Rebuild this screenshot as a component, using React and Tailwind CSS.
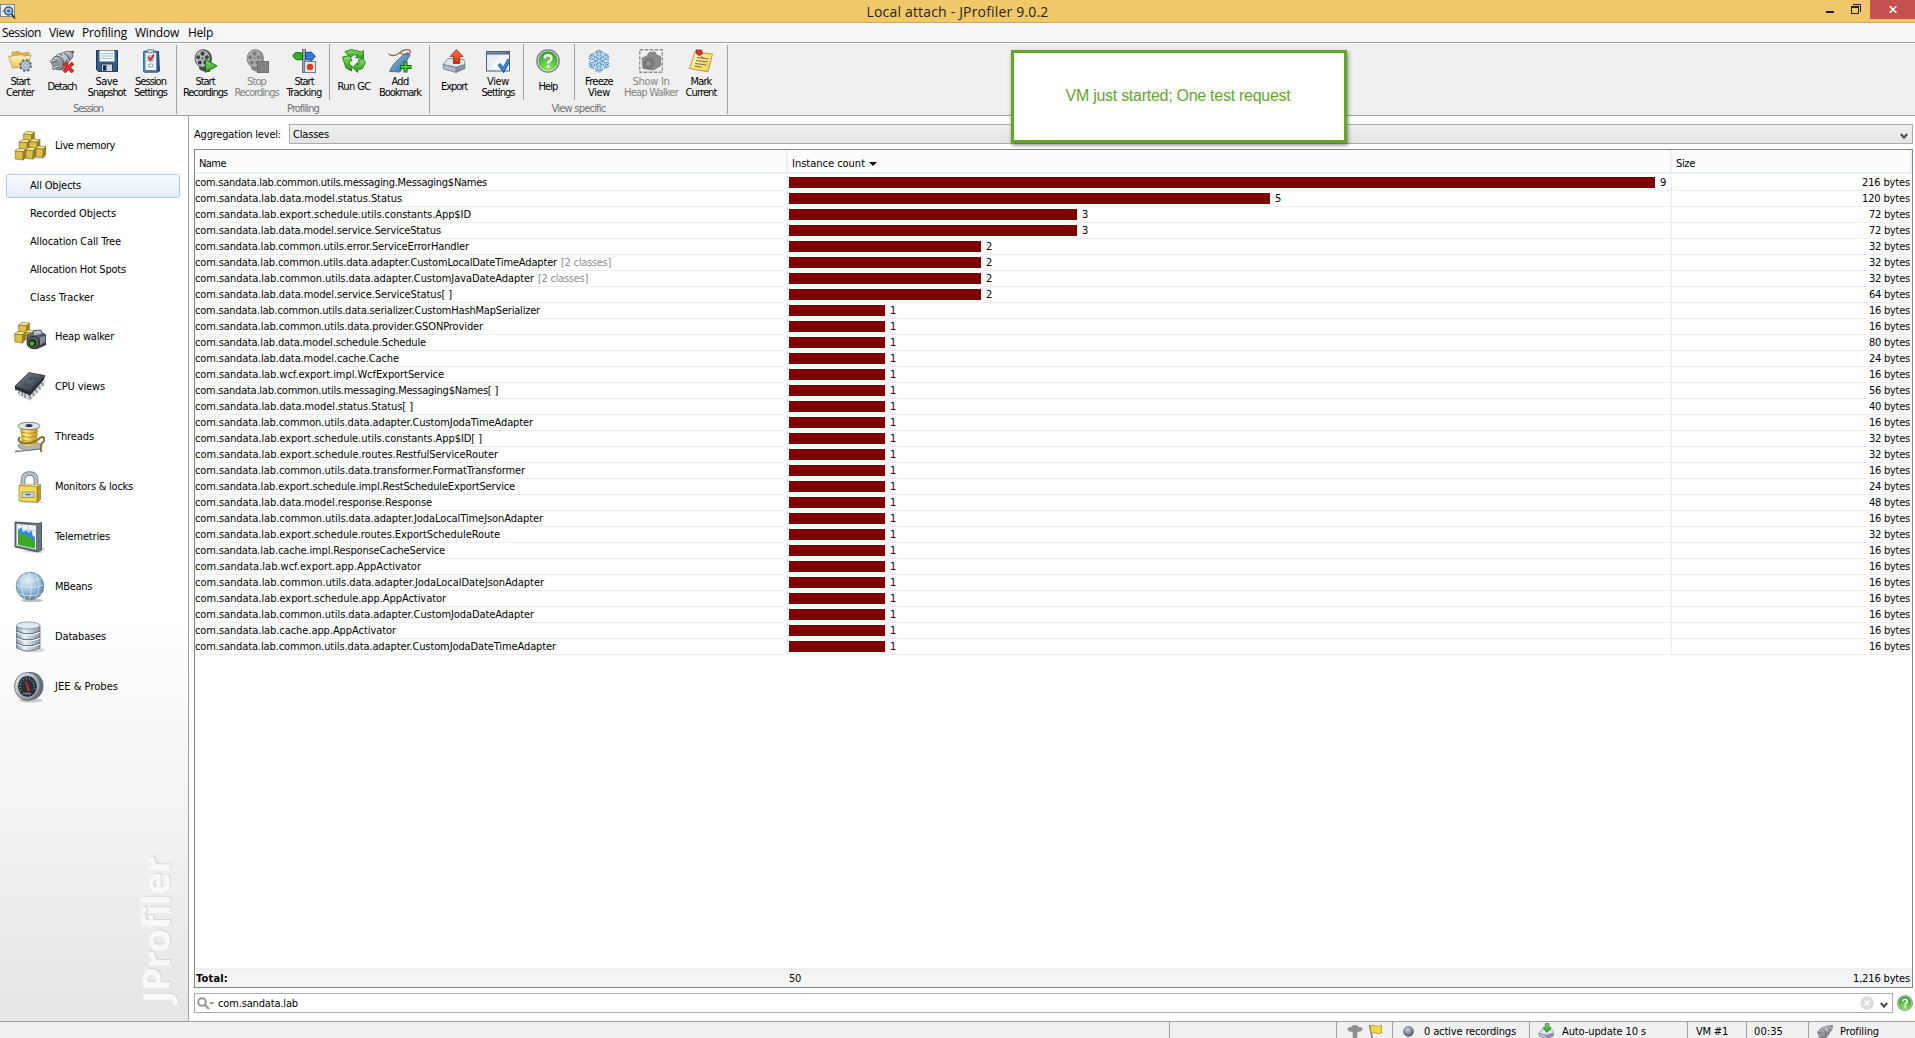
import React, { useLayoutEffect, useRef, useState } from "react";

/* Text run spread to an exact advance width. */
function Fit({ w, className = "", children }) {
  const ref = useRef(null);
  const [spacing, setSpacing] = useState(0);
  useLayoutEffect(() => {
    const natural = ref.current.getBoundingClientRect().width;
    setSpacing((w - natural) / String(children).length);
  }, []);
  return (
    <span ref={ref} style={{ letterSpacing: spacing + "px" }} className={"inline-block whitespace-pre " + className}>
      {children}
    </span>
  );
}

function Defs() {
  return (
    <svg className="absolute size-0">
      <defs>
        <linearGradient id="steel" x1="0" y1="0" x2="1" y2="1">
          <stop offset="0" stopColor="#f4f6f8" />
          <stop offset=".5" stopColor="#a9b1b8" />
          <stop offset="1" stopColor="#596068" />
        </linearGradient>
        <linearGradient id="dark" x1="0" y1="0" x2="1" y2="1">
          <stop offset="0" stopColor="#7c8894" />
          <stop offset="1" stopColor="#252c33" />
        </linearGradient>
        <linearGradient id="gold" x1="0" y1="0" x2="1" y2="0">
          <stop offset="0" stopColor="#c99a14" />
          <stop offset=".35" stopColor="#fff07a" />
          <stop offset="1" stopColor="#c48a10" />
        </linearGradient>
        <linearGradient id="folder" x1="0" y1="0" x2="0" y2="1">
          <stop offset="0" stopColor="#fdf3c4" />
          <stop offset="1" stopColor="#eec45c" />
        </linearGradient>
        <linearGradient id="note" x1="0" y1="0" x2="1" y2="1">
          <stop offset="0" stopColor="#fff9c8" />
          <stop offset="1" stopColor="#f2cf45" />
        </linearGradient>
        <linearGradient id="green" x1="0" y1="0" x2="0" y2="1">
          <stop offset="0" stopColor="#8be06a" />
          <stop offset="1" stopColor="#2a9a17" />
        </linearGradient>
        <linearGradient id="blue" x1="0" y1="0" x2="1" y2="1">
          <stop offset="0" stopColor="#a9cdea" />
          <stop offset="1" stopColor="#1d5c9e" />
        </linearGradient>
        <linearGradient id="red" x1="0" y1="0" x2="0" y2="1">
          <stop offset="0" stopColor="#ff7a4a" />
          <stop offset="1" stopColor="#cf2a10" />
        </linearGradient>
        <linearGradient id="drum" x1="0" y1="0" x2="1" y2="0">
          <stop offset="0" stopColor="#8b9aa6" />
          <stop offset=".35" stopColor="#e9f0f5" />
          <stop offset="1" stopColor="#8797a5" />
        </linearGradient>
        <radialGradient id="globe" cx=".4" cy=".3" r=".75">
          <stop offset="0" stopColor="#e4f0f9" />
          <stop offset=".6" stopColor="#93b8d6" />
          <stop offset="1" stopColor="#56799a" />
        </radialGradient>
        <radialGradient id="ball" cx=".4" cy=".3" r=".8">
          <stop offset="0" stopColor="#ccd4dc" />
          <stop offset="1" stopColor="#3f4a56" />
        </radialGradient>
        <radialGradient id="helpg" cx=".5" cy=".85" r=".9">
          <stop offset="0" stopColor="#8aea5e" />
          <stop offset="1" stopColor="#2c9425" />
        </radialGradient>
      </defs>
    </svg>
  );
}

const Svg = ({ s = 24, vb = 24, children, className = "" }) => (
  <svg width={s} height={s} viewBox={`0 0 ${vb} ${vb}`} fill="none" className={"block shrink-0 " + className}>
    {children}
  </svg>
);

const Reel = ({ c1, c2, c3 }) => (
  <>
    <path d="M6 17 Q5 21 11 22.500 L17 23 L17 18 Z" fill={c2} />
    <ellipse cx="11" cy="9.500" rx="8" ry="9" fill={c2} />
    <ellipse cx="9.600" cy="9.500" rx="7.600" ry="8.800" fill={c1} stroke={c3} strokeWidth=".8" />
    <circle cx="9.600" cy="4.600" r="2.100" fill={c3} />
    <circle cx="5.200" cy="8.200" r="1.900" fill={c3} />
    <circle cx="13.800" cy="8.200" r="1.900" fill={c3} />
    <circle cx="6.800" cy="13.500" r="2" fill={c3} />
    <circle cx="12.400" cy="13.500" r="2" fill={c3} />
    <circle cx="9.600" cy="9.400" r="1" fill={c3} />
    <path d="M7 20 L10 18.500 M10 21.500 L13 19" stroke={c3} />
  </>
);

const StartCenter = () => (
  <Svg>
    <path d="M4 3.500 L11 2.500 L12.500 4.500 L21 3.500 L21 15 L6 18 Z" fill="#e3b64e" stroke="#b98a2c" strokeWidth=".8" />
    <path d="M.7 7.500 L14 5.500 L15.500 7 L23.300 6 L19 17 L4.500 19 Z" fill="url(#folder)" stroke="#c0913a" strokeWidth=".8" />
    <circle cx="17.500" cy="16.500" r="5.200" stroke="#5f7387" strokeWidth="2.600" strokeDasharray="2.200 1.880" />
    <circle cx="17.500" cy="16.500" r="4.500" fill="#b9cadb" stroke="#5f7387" strokeWidth=".8" />
    <circle cx="17.500" cy="16.500" r="1.700" fill="#f4f4f4" stroke="#5f7387" strokeWidth=".8" />
  </Svg>
);
const Plug = () => (
  <>
    <path d="M18 5 Q20 2.500 24 3" stroke="#5a5f64" strokeWidth="2.200" />
    <path d="M5 8 Q7 4.500 11 4.500 L16 2.500 Q22 1.500 23 5 Q23.500 9 19 12.500 L17 17 Q14 21 10 21 Z" fill="url(#steel)" stroke="#555b60" strokeWidth=".8" />
    <path d="M10 5.500 Q16 8 17.500 14.500 M14 4 Q18.500 6 20 11" stroke="#50565b" />
    <path d="M12 6.500 Q15 8 16 11" stroke="#fff" strokeWidth=".9" />
    <ellipse cx="8" cy="14" rx="5.800" ry="7" transform="rotate(-30 8 14)" fill="url(#steel)" stroke="#555b60" strokeWidth=".9" />
    <ellipse cx="7" cy="14.800" rx="3.600" ry="4.800" transform="rotate(-30 7 14.800)" fill="#8f969c" />
    <path d="M.5 13 L6.500 11 M2.500 20 L9 17" stroke="#4c5258" strokeWidth="2.600" />
    <path d="M.8 12.600 L6.300 10.800 M2.800 19.500 L8.800 16.700" stroke="#e8ebed" strokeWidth="1.100" />
  </>
);
const Detach = () => (
  <Svg>
    <Plug />
    <path d="M14 14 L23 23 M23 14 L14 23" stroke="#a30f0f" strokeWidth="3.600" />
    <path d="M14.300 14.300 L22.700 22.700 M22.700 14.300 L14.300 22.700" stroke="#e8302a" strokeWidth="2.400" />
  </Svg>
);
const Save = () => (
  <Svg>
    <path d="M1.500 1.500 H22.500 V22.500 H3.500 L1.500 20.500 Z" fill="#2f5f8d" stroke="#1b3552" />
    <rect x="4.500" y="1.500" width="15" height="11" fill="#f2f7fb" />
    <path d="M6 4.500 H18 M6 7 H18 M6 9.500 H18" stroke="#a8c0d6" />
    <rect x="6.500" y="15" width="11" height="7.500" fill="#cfd7de" stroke="#22344a" strokeWidth=".8" />
    <rect x="8" y="16.200" width="3.400" height="5.500" fill="#1d2f45" />
  </Svg>
);
const SessionSettings = () => (
  <Svg>
    <path d="M5 2 H20 L21 22 L19 23.500 H5 Z" fill="#234a72" />
    <rect x="4.500" y="2" width="14" height="21" rx="1" fill="#4d86bb" stroke="#2c5c8c" strokeWidth=".8" />
    <rect x="6.500" y="4" width="10.500" height="17" fill="#f7f9fb" />
    <rect x="8.500" y=".5" width="6" height="3.500" rx=".8" fill="#c6ced6" stroke="#5f6c79" strokeWidth=".7" />
    <rect x="9" y="7" width="5" height="5" stroke="#8793a0" />
    <rect x="9.500" y="15" width="4.500" height="3" rx=".5" stroke="#8793a0" />
    <path d="M9.500 8 L11.500 11 L15 5.500" stroke="#d01f1f" strokeWidth="1.700" />
  </Svg>
);
const StartRec = () => (
  <Svg>
    <Reel c1="#b4b9bc" c2="#4a4f52" c3="#3b4043" />
    <path d="M12.500 10.500 L24 17 L12.500 23.300 Z" fill="url(#green)" stroke="#176b0e" />
  </Svg>
);
const StopRec = () => (
  <Svg>
    <Reel c1="#ababab" c2="#8a8a8a" c3="#7b7b7b" />
    <rect x="12.500" y="12.500" width="11" height="11" fill="#828282" stroke="#6f6f6f" />
  </Svg>
);
const Tracking = () => (
  <Svg>
    <rect x="10.500" y=".5" width="3" height="23" fill="#9aa3aa" stroke="#5e666d" strokeWidth=".8" />
    <path d="M.8 7 Q2 3 6 3.500 L10.500 4 V10.500 L6 11 Q3 11 .8 7 Z" fill="#35b02c" stroke="#14690e" strokeWidth=".9" />
    <path d="M13.500 3.500 L19 3 L23.300 7 L20 11.500 L13.500 10.500 Z" fill="#3578d6" stroke="#173f8a" strokeWidth=".9" />
    <rect x="12.500" y="12.500" width="11" height="11" fill="#dde6ee" stroke="#6b7e91" />
    <circle cx="18" cy="18" r="3.200" fill="#e8330d" />
  </Svg>
);
const RunGC = () => (
  <Svg>
    <g fill="url(#green)" stroke="#1a7d12" strokeWidth=".9" strokeLinejoin="round">
      <path d="M3 2.500 L9 .6 L14 1.500 L19 3 L21.500 1.500 L21.500 9.500 L13.500 8.500 L15.800 7 L12.500 5.500 L9 8 L5 5 Z" />
      <path d="M.6 8 L7.500 6.500 L10 12 L7.600 11.700 L7.400 15.500 L10.300 17.500 L9.500 22 L4 19 L1.800 12.500 Z" />
      <path d="M11 18.500 L15.500 13.500 V16 L17.200 14.500 L16.500 11 L21 9.500 L23.400 13.500 L20.500 19.500 L15.500 21 V23.500 Z" />
    </g>
  </Svg>
);
const Bookmark = () => (
  <Svg>
    <path d="M22 6 L12 23 L1.500 22.500 L5 16 L15 6 L20 3.500 Z" fill="url(#blue)" stroke="#3f6b95" strokeWidth=".9" />
    <path d="M.5 5 Q5 8 10 5 Q16 0 21 .8 Q24 2 21 4.500 Q18 7 12 4" stroke="#8a6748" strokeWidth="1.300" />
    <path d="M17.500 12.500 V23.500 M12 18 H23.500" stroke="#0b6b0b" strokeWidth="4" />
    <path d="M17.500 13.300 V22.700 M12.800 18 H22.700" stroke="#46c92f" strokeWidth="2" />
  </Svg>
);
const Tray = () => (
  <>
    <path d="M1 15.500 L6 9.500 L22 10.500 L23 15.500 L14 18.500 Z" fill="#dfe6ec" stroke="#6d7c8a" strokeWidth=".8" />
    <path d="M1 15.500 L14 18.500 V23.500 L1.500 20 Z" fill="#aebdca" stroke="#6d7c8a" strokeWidth=".8" />
    <path d="M14 18.500 L23 15.500 V19.500 L14 23.500 Z" fill="#8295a6" stroke="#6d7c8a" strokeWidth=".8" />
  </>
);
const Export = () => (
  <Svg>
    <Tray />
    <path d="M14.500 .5 L21 7.500 H17.800 V14.500 H11.500 V7.500 H8.200 Z" fill="url(#red)" stroke="#9c2411" strokeWidth=".8" />
  </Svg>
);
const ViewSettings = () => (
  <Svg>
    <rect x=".5" y="2.500" width="23" height="19.500" fill="#e6eff5" stroke="#4a5f74" />
    <path d="M.5 2.500 H23.500 V5 H.5 Z" fill="#7690a8" stroke="#4a5f74" />
    <rect x="20.500" y="3" width="2" height="1.500" fill="#d7301f" />
    <path d="M3 19 L16 6 H22 V10 L12 20 Z" fill="#fff" opacity=".6" />
    <path d="M13 15 L17.500 21 L23 10.500" stroke="#1d5c9e" strokeWidth="3.600" />
    <path d="M13.500 15.500 L17.500 20.500 L22.600 11" stroke="#3d8fd6" strokeWidth="1.800" />
  </Svg>
);
const HelpIcon = ({ s = 24 }) => (
  <Svg s={s}>
    <circle cx="12" cy="12" r="11.800" fill="#6f7a80" />
    <circle cx="12" cy="12" r="10.500" fill="#dfe8dd" />
    <circle cx="12" cy="12" r="9.700" fill="url(#helpg)" />
    <path d="M8.700 9.500 Q8.700 6.300 12 6.300 Q15.400 6.300 15.400 9.200 Q15.400 11 13.600 12 Q12.200 12.900 12.200 14.500" stroke="#fff" strokeWidth="2.400" />
    <rect x="11" y="16" width="2.500" height="2.600" fill="#fff" />
  </Svg>
);
const Freeze = () => (
  <Svg>
    {["#3a76a8", "#b4dbf3"].map((c, i) => (
      <g key={c} stroke={c} strokeWidth={i ? 1.3 : 2.6}>
        {[0, 60, 120, 180, 240, 300].map((a) => (
          <path key={a} transform={`rotate(${a} 12 12)`} d="M12 12 V.8 M8.500 2.500 L12 6 L15.500 2.500 M9.500 6.500 L12 9 L14.500 6.500" />
        ))}
      </g>
    ))}
  </Svg>
);
const HeapShot = () => (
  <Svg>
    <rect x=".75" y=".75" width="22.500" height="22.500" stroke="#8c8c8c" strokeWidth="1.300" strokeDasharray="3.500 1.500" />
    <path d="M3 9 L8 7 L10 3.500 L16 3 L17.500 6 L21.500 7.500 V17 L14 21 L4 19.500 Z" fill="#8b8b8b" stroke="#777" strokeWidth=".8" />
    <circle cx="9.500" cy="14.500" r="4.800" fill="#7c7c7c" stroke="#6c6c6c" />
    <circle cx="9.500" cy="14.500" r="2.400" fill="#939393" />
  </Svg>
);
const Mark = () => (
  <Svg>
    <path d="M6 3 L23.500 5 L19 22.800 L.5 19.500 Z" fill="url(#note)" stroke="#b58f25" strokeWidth=".9" />
    <path d="M8 8.500 L19.500 10 M7 11.500 L18.500 13 M6 14.500 L17.500 16 M5.500 17 L13 18.200" stroke="#6d6440" strokeWidth=".9" />
    <path d="M12 7 L15 10" stroke="#6d6440" />
    <path d="M7 1 L12.500 1 L13.500 5 L10 6.500 L7 4 Z" fill="#d83a3a" stroke="#951515" strokeWidth=".8" />
  </Svg>
);

const Cube = ({ x, y, s = 10 }) => (
  <g transform={`translate(${x} ${y}) scale(${s / 10})`} stroke="#7f6a1c" strokeWidth=".6" strokeLinejoin="round">
    <path d="M0 2.500 L3 0 L10.500 .5 L8 3 Z" fill="#f7eb9c" />
    <path d="M0 2.500 L8 3 L7.500 11 L.5 10 Z" fill="#dcc04a" />
    <path d="M8 3 L10.500 .5 L10.300 8 L7.500 11 Z" fill="#9c8020" />
  </g>
);
const LiveMemory = () => (
  <Svg s={32} vb={32}>
    <ellipse cx="17" cy="27" rx="15" ry="2.500" fill="#000" opacity=".15" />
    <Cube x={9.5} y={1.5} s={10.5} />
    <Cube x={5} y={9.5} s={10.5} />
    <Cube x={15} y={9} s={10.5} />
    <Cube x={21} y={16} s={10.5} />
    <Cube x={11} y={17.500} s={10.5} />
    <Cube x={1} y={18.500} s={10.5} />
  </Svg>
);
const HeapWalker = () => (
  <Svg s={32} vb={32}>
    <Cube x={4.500} y={1.500} s={10.500} />
    <Cube x={11} y={9} s={9.500} />
    <Cube x={.5} y={10.5} s={10.500} />
    <path d="M13 14 L18 12.500 L20 9.500 L27 9 L28 12 L31.500 13.500 V24 L22 28 L14 25 Z" fill="url(#dark)" stroke="#30373d" strokeWidth=".8" />
    <path d="M20 10 L27 9.500 L27.500 13 L20 14 Z" fill="#b9c2ca" />
    <path d="M26 16 L31 15 V21 L26 24 Z" fill="#828c95" />
    <circle cx="19" cy="21.500" r="6" fill="#5d666e" stroke="#20262b" />
    <circle cx="18.500" cy="22" r="3.800" fill="#15230f" />
    <circle cx="18" cy="22.500" r="2.200" fill="#3dbb2a" />
  </Svg>
);
const Cpu = () => (
  <Svg s={32} vb={32}>
    <path d="M4 24 L16 30 L31 12 L31 9 Z" fill="#000" opacity=".15" />
    <path d="M2 17 V20 M5 19.500 V23 M8 21 V25 M11 22.500 V27 M15 24 L17 28 M18 21 L20.500 25 M21 18 L23.500 22 M24 14.500 L26.500 18.500 M27 11 L29.500 15" stroke="#8b949c" strokeWidth="1.800" />
    <path d="M1 15 L15 1.500 L31 4.500 L30 8.500 L16 24.500 L1 18 Z" fill="#252b31" />
    <path d="M1 15 L15 1.500 L31 4.500 L16 20.500 Z" fill="url(#dark)" stroke="#383f46" strokeWidth=".6" />
    <path d="M8 14 L17 5.500 L25 7 L16 16 Z" fill="#46515c" />
    <path d="M12 12.500 L16 9 M15 13 L20 8.500" stroke="#76828d" />
  </Svg>
);
const Threads = () => (
  <Svg s={32} vb={32}>
    <ellipse cx="16" cy="25" rx="12" ry="4" fill="#aeb4b8" stroke="#6e7478" strokeWidth=".7" />
    <path d="M6 6 H24 L22.500 23 Q15 27 8 23 Z" fill="url(#gold)" />
    <path d="M7 11 Q15 14 23.500 11 M7.500 15 Q15 18 23 15 M7.500 19 Q15 22 23 19" stroke="#b08218" strokeWidth=".8" />
    <ellipse cx="15" cy="5" rx="11" ry="3.800" fill="#dfe2e4" stroke="#666c70" strokeWidth=".8" />
    <ellipse cx="15" cy="4.600" rx="3.500" ry="1.500" fill="#33383b" />
    <path d="M6 16 Q2 20 9 22 Q18 24 26 17 Q31 14 30 20 Q25 24 27.500 31" stroke="#8d6b2a" strokeWidth="1.900" />
    <path d="M1 30.500 L27 27.500" stroke="#5b6166" strokeWidth="1.600" />
    <path d="M1 30 L26 27" stroke="#dfe3e6" strokeWidth=".6" />
  </Svg>
);
const Locks = () => (
  <Svg s={32} vb={32}>
    <ellipse cx="18" cy="31" rx="12" ry="1.500" fill="#000" opacity=".12" />
    <path d="M9 16 V9 Q9 2.500 15.500 2.500 Q22 2.500 22 9 V16" stroke="#67727c" strokeWidth="4.600" />
    <path d="M9 16 V9 Q9 2.500 15.500 2.500 Q22 2.500 22 9 V16" stroke="#b4c0ca" strokeWidth="3" />
    <path d="M23 15.500 L26.500 13.500 V28.500 L23 31.500 Z" fill="#b59a26" stroke="#7e6a17" strokeWidth=".6" />
    <path d="M5 14.500 L8 13 L26.500 13.500 L23 15.500 Z" fill="#fdf7b0" stroke="#94802a" strokeWidth=".5" />
    <path d="M5 14.500 L23 15.500 V31.500 L5 30 Z" fill="#efd955" stroke="#94802a" strokeWidth=".7" />
    <path d="M8 21 H20 V26.500 H8 Z" fill="#c9d2da" stroke="#717b85" strokeWidth=".7" />
    <path d="M11.500 23.500 H16.500" stroke="#5c666f" strokeWidth="1.400" />
  </Svg>
);
const Telemetries = () => (
  <Svg s={32} vb={32}>
    <path d="M8 31 L28 32 L31 28 L26 24 Z" fill="#000" opacity=".15" />
    <path d="M1 1 L24 2.500 L27.500 1.500 V29 L23.500 31 L1 26 Z" fill="#67757f" stroke="#39434b" strokeWidth=".8" />
    <path d="M2.500 3 L22 4.500 V28.500 L2.500 24.500 Z" fill="#eef4f8" />
    <path d="M2.500 8 L22 10 M8 3.500 V12 M14 4 V12" stroke="#a5c5da" strokeWidth=".8" />
    <path d="M4 9 L7 6.500 L9 11 L12 9.500 L15 12 L17 9 L19 15 L21 16 V24 L4 18 Z" fill="#3988cc" />
    <path d="M4 13 L6 11 L8 15 L11 14.500 L13 17.500 L15 15 L18 18.500 L21 22 V27.500 L4 24 Z" fill="#3faa1f" />
  </Svg>
);
const MBeans = () => (
  <Svg s={32} vb={32}>
    <ellipse cx="18" cy="29.500" rx="11" ry="1.600" fill="#000" opacity=".25" />
    <circle cx="16" cy="15" r="13.800" fill="url(#globe)" stroke="#5d7f9e" strokeWidth=".8" />
    <path d="M2.500 14 Q16 19 29.500 14 M5 7.500 Q16 11.500 27 7.500 M5 22.500 Q16 27 27 22.500 M14.500 1.200 Q20 14 15.500 28.500 M10 2.500 Q4.500 14 11 28 M21 2.500 Q29 14 21.500 27.500" stroke="#dcebf6" strokeWidth=".7" />
  </Svg>
);
const Databases = () => (
  <Svg s={32} vb={32}>
    <ellipse cx="19" cy="29" rx="12" ry="2.500" fill="#000" opacity=".15" />
    <path d="M2.500 5 V27 Q14 33 26 27 V5 Z" fill="url(#drum)" stroke="#64727f" strokeWidth=".8" />
    <ellipse cx="14.250" cy="4.500" rx="11.750" ry="3.500" fill="#dfe8ef" stroke="#7c8b98" strokeWidth=".8" />
    <g strokeWidth="1.100">
      <path d="M2.500 10 Q14 15.500 26 10 M2.500 16 Q14 21.500 26 16 M2.500 22 Q14 27.500 26 22" stroke="#5d6b78" />
      <path d="M2.800 11.200 Q14 16.700 25.700 11.200 M2.800 17.200 Q14 22.700 25.700 17.200 M2.800 23.200 Q14 28.700 25.700 23.200" stroke="#f5f9fb" />
    </g>
  </Svg>
);
const Probes = () => (
  <Svg s={32} vb={32}>
    <ellipse cx="17" cy="29.500" rx="12" ry="2" fill="#000" opacity=".2" />
    <ellipse cx="16.500" cy="15" rx="13" ry="14" fill="#5c7080" />
    <ellipse cx="13.500" cy="15.500" rx="13" ry="14" fill="url(#steel)" stroke="#5c656d" strokeWidth=".8" />
    <ellipse cx="13.500" cy="15.500" rx="10" ry="11" fill="#2a313b" stroke="#c3cad0" strokeWidth="1" />
    <path d="M6.500 20 Q4.500 9 13 7.500 Q21 8 20.500 19" stroke="#9aa5b0" strokeWidth="1.300" strokeDasharray="1 2" />
    <path d="M12 10 L15.500 19.500 L13.800 19.500 Z" fill="#ff4a33" stroke="#d52b1c" strokeWidth=".7" />
    <path d="M9 22.500 H17" stroke="#7f8890" strokeWidth="1.500" />
  </Svg>
);

const TOOLBAR = [
  {
    label: "Session", lw: 30, width: "w-[177px]",
    sets: [
      [
        { w: "w-10", icon: StartCenter, t: [["Start", 19], ["Center", 28]] },
        { w: "w-11", icon: Detach, t: [["Detach", 29]] },
        { w: "w-[45px]", icon: Save, t: [["Save", 22], ["Snapshot", 38]] },
        { w: "w-[43px]", icon: SessionSettings, t: [["Session", 31], ["Settings", 33]] },
      ],
    ],
  },
  {
    label: "Profiling", lw: 32, width: "w-[253px]",
    sets: [
      [
        { w: "w-[54px] ml-px", icon: StartRec, t: [["Start", 19], ["Recordings", 44]] },
        { w: "w-[49px]", icon: StopRec, off: true, t: [["Stop", 19], ["Recordings", 44]] },
        { w: "w-[46px] mr-0.5", icon: Tracking, t: [["Start", 19], ["Tracking", 35]] },
      ],
      [
        { w: "w-10 ml-1", icon: RunGC, t: [["Run GC", 33]] },
        { w: "w-[52px]", icon: Bookmark, t: [["Add", 17], ["Bookmark", 42]] },
      ],
    ],
  },
  {
    label: "View specific", lw: 54, width: "w-[298px]",
    sets: [
      [
        { w: "w-9 ml-1.5", icon: Export, t: [["Export", 26]] },
        { w: "w-[46px] ml-[3px] mr-0.5", icon: ViewSettings, t: [["View", 22], ["Settings", 33]] },
      ],
      [{ w: "w-12 mr-0.5", icon: HelpIcon, t: [["Help", 19]] }],
      [
        { w: "w-[46px] ml-px", icon: Freeze, t: [["Freeze", 28], ["View", 22]] },
        { w: "w-[54px] ml-0.5", icon: HeapShot, off: true, t: [["Show In", 37], ["Heap Walker", 54]] },
        { w: "w-[42px] ml-0.5", icon: Mark, t: [["Mark", 21], ["Current", 31]] },
      ],
    ],
  },
];

const P = "com.sandata.lab.";
const ROWS = [
  ["common.utils.messaging.Messaging$Names", 292, 9, "216"],
  ["data.model.status.Status", 207, 5, "120"],
  ["export.schedule.utils.constants.App$ID", 276, 3, "72"],
  ["data.model.service.ServiceStatus", 246, 3, "72"],
  ["common.utils.error.ServiceErrorHandler", 274, 2, "32"],
  ["common.utils.data.adapter.CustomLocalDateTimeAdapter", 362, 2, "32", true],
  ["common.utils.data.adapter.CustomJavaDateAdapter", 339, 2, "32", true],
  ["data.model.service.ServiceStatus[ ]", 257, 2, "64"],
  ["common.utils.data.serializer.CustomHashMapSerializer", 345, 1, "16"],
  ["common.utils.data.provider.GSONProvider", 288, 1, "16"],
  ["data.model.schedule.Schedule", 231, 1, "80"],
  ["data.model.cache.Cache", 204, 1, "24"],
  ["wcf.export.impl.WcfExportService", 249, 1, "16"],
  ["common.utils.messaging.Messaging$Names[ ]", 303, 1, "56"],
  ["data.model.status.Status[ ]", 218, 1, "40"],
  ["common.utils.data.adapter.CustomJodaTimeAdapter", 338, 1, "16"],
  ["export.schedule.utils.constants.App$ID[ ]", 287, 1, "32"],
  ["export.schedule.routes.RestfulServiceRouter", 303, 1, "32"],
  ["common.utils.data.transformer.FormatTransformer", 330, 1, "16"],
  ["export.schedule.impl.RestScheduleExportService", 320, 1, "24"],
  ["data.model.response.Response", 237, 1, "48"],
  ["common.utils.data.adapter.JodaLocalTimeJsonAdapter", 348, 1, "16"],
  ["export.schedule.routes.ExportScheduleRoute", 305, 1, "32"],
  ["cache.impl.ResponseCacheService", 250, 1, "16"],
  ["wcf.export.app.AppActivator", 226, 1, "16"],
  ["common.utils.data.adapter.JodaLocalDateJsonAdapter", 349, 1, "16"],
  ["export.schedule.app.AppActivator", 251, 1, "16"],
  ["common.utils.data.adapter.CustomJodaDateAdapter", 339, 1, "16"],
  ["cache.app.AppActivator", 201, 1, "16"],
  ["common.utils.data.adapter.CustomJodaDateTimeAdapter", 361, 1, "16"],
];

const NAV = [
  ["Heap walker", 59, HeapWalker],
  ["CPU views", 50, Cpu],
  ["Threads", 39, Threads],
  ["Monitors & locks", 78, Locks],
  ["Telemetries", 55, Telemetries],
  ["MBeans", 37, MBeans],
  ["Databases", 51, Databases],
  ["JEE & Probes", 63, Probes],
];
const SUBNAV = [
  ["All Objects", 51],
  ["Recorded Objects", 86],
  ["Allocation Call Tree", 91],
  ["Allocation Hot Spots", 96],
  ["Class Tracker", 64],
];

function ToolButton({ b }) {
  const Icon = b.icon;
  return (
    <div className={"flex shrink-0 flex-col items-center pt-1 " + b.w + (b.off ? " text-[#838383]" : "")}>
      <Icon />
      <div className="flex h-7 flex-col items-center justify-center leading-[11px]">
        {b.t.map(([s, w]) => (
          <Fit key={s} w={w}>{s}</Fit>
        ))}
      </div>
    </div>
  );
}

function NavItem({ label, w, icon: Icon }) {
  return (
    <div className="flex h-[50px] items-center pl-3.5">
      <Icon />
      <Fit w={w} className="ml-[9px]">{label}</Fit>
    </div>
  );
}

const Chevron = ({ className = "" }) => (
  <svg width="8" height="7" viewBox="0 0 8 7" fill="none" className={"block " + className}>
    <path d="M.8 1 L4 4.500 L7.200 1" stroke="#505050" strokeWidth="2.200" />
  </svg>
);

export default function App() {
  return (
    <div className="flex h-[1038px] w-[1915px] flex-col overflow-hidden bg-[#f0f0f0] font-['DejaVu_Sans_Condensed','DejaVu_Sans',sans-serif] text-[11px] leading-[14px] text-black">
      <Defs />
      <header className="relative flex h-[23px] shrink-0 items-center justify-center border-b border-[#cfa85a] bg-[#f0c869]">
        <svg width="16" height="16" viewBox="0 0 16 16" fill="none" className="absolute left-0 top-1">
          <rect x=".5" y=".5" width="14" height="12" fill="#eaf1f7" stroke="#7d8790" />
          <path d="M2 7 H14" stroke="#4d90c8" strokeDasharray="2 1" />
          <circle cx="8.500" cy="7" r="4" fill="#a9cbe6" stroke="#3d5468" strokeWidth="1.500" />
          <circle cx="8.500" cy="7" r="1.500" fill="#2d6ca3" />
          <path d="M11.500 10 L15 14.500" stroke="#3b3b3b" strokeWidth="2" />
        </svg>
        <span className="pt-px font-['Open_Sans','Noto_Sans',sans-serif] text-[14px] leading-none text-[#2a2312]">
          <Fit w={182}>Local attach - JProfiler 9.0.2</Fit>
        </span>
        <div className="absolute right-0 top-0 flex h-[19px] items-start">
          <div className="mr-[17px] mt-[11px] h-0.5 w-2 bg-[#1e1e1e]" />
          <svg width="10" height="10" viewBox="0 0 10 10" fill="none" className="mr-[9px] mt-1">
            <path d="M2 .5 H9.500 V8" stroke="#1e1e1e" />
            <rect x=".5" y="2.500" width="7" height="7" stroke="#1e1e1e" />
            <path d="M0 3 H8" stroke="#1e1e1e" strokeWidth="2" />
          </svg>
          <div className="flex h-[19px] w-[45px] items-center justify-center bg-[#c75050]">
            <svg width="8" height="7" viewBox="0 0 8 7" fill="none">
              <path d="M.6 0 L7.400 7 M7.400 0 L.6 7" stroke="#fff" strokeWidth="1.700" />
            </svg>
          </div>
        </div>
      </header>

      <nav className="flex h-5 shrink-0 items-center border-b border-[#a0a0a0] bg-[#f5f6f7] pl-0.5 font-['Open_Sans','Noto_Sans',sans-serif] text-[12px] leading-none">
        {[["Session", 39, "mr-2"], ["View", 25, "mr-2"], ["Profiling", 45, "mr-2"], ["Window", 44, "mr-[9px]"], ["Help", 25, ""]].map(([s, w, m]) => (
          <span key={s} className={m}><Fit w={w}>{s}</Fit></span>
        ))}
      </nav>

      <div className="flex h-[73px] shrink-0 border-b border-t border-b-[#a0a0a0] border-t-white">
        {TOOLBAR.map((g) => (
          <div key={g.label} className={"my-px flex shrink-0 flex-col border-r border-[#a0a0a0] " + g.width}>
            <div className="flex h-[55px]">
              {g.sets.map((set, i) => (
                <div key={i} className={"-mt-px flex shrink-0 pt-px " + (i < g.sets.length - 1 ? "border-r border-[#a0a0a0]" : "")}>
                  {set.map((b, j) => <ToolButton key={j} b={b} />)}
                </div>
              ))}
            </div>
            <div className="mt-[3px] text-center leading-3 text-[#6f7072]"><Fit w={g.lw}>{g.label}</Fit></div>
          </div>
        ))}
      </div>

      <div className="flex h-[905px] shrink-0">
        <aside className="relative w-[189px] shrink-0 border-r border-[#a0a0a0] bg-linear-to-b from-white from-55% to-[#e6e6e6] pt-[5px]">
          <NavItem label="Live memory" w={60} icon={LiveMemory} />
          <div className="mb-2 mt-[3px]">
            {SUBNAV.map(([s, w], i) => (
              <div
                key={s}
                className={
                  "mb-1 ml-1.5 flex h-6 w-[174px] items-center rounded-[3px] border pl-[23px] " +
                  (i === 0 ? "border-[#aecbea] bg-linear-to-b from-[#fafcfe] to-[#e3edf7]" : "border-transparent")
                }
              >
                <Fit w={w}>{s}</Fit>
              </div>
            ))}
          </div>
          <div className="-mt-1.5">
            {NAV.map(([s, w, icon]) => <NavItem key={s} label={s} w={w} icon={icon} />)}
          </div>
          <div className="absolute bottom-[18px] left-[132px] h-[150px] w-[46px] rotate-180 whitespace-nowrap font-['Open_Sans','Noto_Sans',sans-serif] text-[38px] font-bold leading-[46px] tracking-[-0.95px] text-[#f8f8f8] [text-shadow:1px_1px_0_#d6d6d6] [writing-mode:vertical-rl]">
            JProfiler
          </div>
        </aside>

        <main className="flex flex-1 flex-col bg-white pl-[5px] pr-0.5 pt-2">
          <div className="flex h-5 items-center">
            <Fit w={87} className="mt-px">Aggregation level:</Fit>
            <div className="ml-2 flex h-5 flex-1 items-center justify-between border border-[#acacac] bg-linear-to-b from-[#f0f0f0] to-[#e4e4e4] pl-[3px] pr-1">
              <Fit w={36} className="mt-0.5">Classes</Fit>
              <Chevron className="mt-1" />
            </div>
          </div>

          <section className="mt-[5px] flex h-[839px] flex-col border border-[#828790]">
            <div className="flex h-6 shrink-0 items-center border-b-2 border-[#e8eff7] bg-[#fcfcfc]">
              <div className="flex h-full w-[593px] items-center border-r-2 border-[#e8eff7] pl-1 pt-1.5"><Fit w={27}>Name</Fit></div>
              <div className="flex h-full w-[884px] items-center border-r-2 border-[#e8eff7] pl-1 pt-1.5">
                <Fit w={73}>Instance count</Fit>
                <svg width="8" height="4" viewBox="0 0 8 4" className="ml-1"><path d="M0 0 H8 L4 4 Z" fill="#000" /></svg>
              </div>
              <div className="flex h-full flex-1 items-center border-r-2 border-[#e8eff7] pl-1 pt-1.5"><Fit w={19}>Size</Fit></div>
            </div>
            {ROWS.map(([name, w, count, size, multi], i) => (
              <div key={i} className={"flex shrink-0 items-center border-b border-[#ededed] " + (i ? "h-4" : "h-[17px] pt-px")}>
                <div className="flex h-full w-[593px] items-center border-r border-[#ededed]">
                  <Fit w={w}>{P + name}</Fit>
                  {multi && <span className="ml-1 text-[#8c8c8c]"><Fit w={50}>[2 classes]</Fit></span>}
                </div>
                <div className="flex h-full w-[884px] items-center border-r border-[#ededed] pl-px">
                  <div className="h-[11px] bg-[#800000]" style={{ width: Math.floor(count * 96.25) + "px" }} />
                  <span className="ml-[5px]">{count}</span>
                </div>
                <div className="flex-1 pr-0.5 text-right"><Fit w={size.length === 3 ? 48 : 41}>{size + " bytes"}</Fit></div>
              </div>
            ))}
            <div className="mt-auto flex h-[19px] shrink-0 items-center border-t-[3px] border-[#efefef] bg-[#f4f4f4]">
              <div className="w-[594px] pl-px font-bold"><Fit w={32}>Total:</Fit></div>
              <div className="w-[883px]"><Fit w={12}>50</Fit></div>
              <div className="flex-1 pr-0.5 text-right"><Fit w={57}>1,216 bytes</Fit></div>
            </div>
          </section>

          <div className="mt-[5px] flex items-center">
            <div className="flex h-5 w-[1699px] items-center border border-[#acacac] bg-white pl-0.5">
              <svg width="18" height="13" viewBox="0 0 18 13" fill="none">
                <circle cx="5" cy="5" r="3.800" stroke="#9a9a9a" strokeWidth="2" />
                <path d="M8 8 L12 12" stroke="#9a9a9a" strokeWidth="2.400" />
                <path d="M12 5 H17.500 L14.750 8 Z" fill="#9a9a9a" />
              </svg>
              <Fit w={80} className="ml-[3px] mt-px">com.sandata.lab</Fit>
              <svg width="14" height="14" viewBox="0 0 14 14" fill="none" className="ml-auto">
                <circle cx="7" cy="7" r="6.800" fill="#dcdcdc" />
                <path d="M4.500 4.500 L9.500 9.500 M9.500 4.500 L4.500 9.500" stroke="#fff" strokeWidth="1.500" />
              </svg>
              <Chevron className="ml-1.5 mr-1 mt-1" />
            </div>
            <div className="ml-1"><HelpIcon s={16} /></div>
          </div>
        </main>
      </div>

      <footer className="flex flex-1 items-start border-t border-[#a0a0a0]">
        <div className="h-4 w-[1170px] border-r border-[#a0a0a0]" />
        <div className="h-4 w-[167px] border-r border-[#a0a0a0]" />
        <div className="flex h-4 w-14 items-start gap-1 border-r border-[#a0a0a0] pl-2.5 pt-0.5">
          <Svg s={16} vb={16}>
            <path d="M.5 5 Q.5 3 4 3 Q5 1 8 1 Q11 1 12 3 Q15.500 3 15.500 5 Q15 8 10.500 8 L10 15 H6 L5.500 8 Q1 8 .5 5 Z" fill="#909090" />
          </Svg>
          <Svg s={16} vb={16}>
            <path d="M2.500 1 L5.500 15.500" stroke="#777" strokeWidth="1.400" />
            <path d="M3 2 Q6 0 8.500 2 Q11 3 14.500 1 V9 Q11 10.500 9 9 Q7 8 4.500 9.500 Z" fill="#f3d548" stroke="#b0952a" strokeWidth=".8" />
          </Svg>
        </div>
        <div className="flex h-4 w-[137px] items-start border-r border-[#a0a0a0] pl-2.5 pt-[3px]">
          <Svg s={11} vb={11} className="mt-px"><circle cx="5.500" cy="5.500" r="5" fill="url(#ball)" stroke="#56606a" strokeWidth=".6" /></Svg>
          <Fit w={92} className="ml-2.5">0 active recordings</Fit>
        </div>
        <div className="flex h-4 w-[158px] items-start border-r border-[#a0a0a0] pl-2 pt-[3px]">
          <Svg s={16} className="-mt-0.5">
            <Tray />
            <path d="M13.500 14 L7.500 7 H11 V1 H16.500 V7 H20 Z" fill="url(#green)" stroke="#176b0e" />
          </Svg>
          <Fit w={84} className="ml-2">Auto-update 10 s</Fit>
        </div>
        <div className="h-4 w-[59px] border-r border-[#a0a0a0] pl-2 pt-[3px]"><Fit w={32}>VM #1</Fit></div>
        <div className="h-4 w-[62px] border-r border-[#a0a0a0] pl-[7px] pt-[3px]"><Fit w={29}>00:35</Fit></div>
        <div className="flex pl-2 pt-[3px]">
          <Svg s={16} className="-mt-px"><Plug /></Svg>
          <Fit w={39} className="ml-[7px]">Profiling</Fit>
        </div>
      </footer>

      <div className="absolute left-[1011px] top-[50px] flex h-[93px] w-[336px] items-center justify-center border-[3px] border-[#61a829] bg-white pb-0.5 pr-0.5 font-['Liberation_Sans',Arial,sans-serif] text-[16px] text-[#61a829] shadow-[1px_2px_4px_rgba(0,0,0,0.5)]">
        <Fit w={225}>VM just started; One test request</Fit>
      </div>
    </div>
  );
}
